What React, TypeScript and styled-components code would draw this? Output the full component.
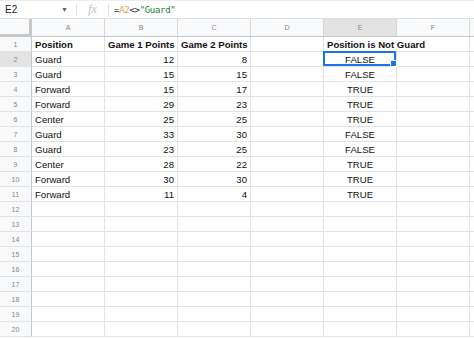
import React from "react";
import styled, { createGlobalStyle } from "styled-components";

const Global = createGlobalStyle`
  html, body { margin: 0; padding: 0; background: #fff; overflow: hidden; }
  body { font-family: Arial, "Liberation Sans", sans-serif; }
`;

const Page = styled.div`
  width: 474px;
  height: 339px;
  overflow: hidden;
  background: #fff;
`;

const FormulaBar = styled.div`
  display: flex;
  align-items: center;
  border-top: 1px solid #ececec;
  border-bottom: 1px solid #e1e1e1;
  box-sizing: border-box;
  height: 19px;
  font-family: "Liberation Sans", Arial, sans-serif;
  font-size: 10px;
  color: #222;
`;

const NameBox = styled.div`
  width: 76px;
  display: flex;
  align-items: center;
  justify-content: space-between;
  padding: 0 8px 0 5px;
  box-sizing: border-box;
`;

const Caret = styled.span`
  font-size: 7px;
  color: #666;
`;

const Sep = styled.div`
  width: 1px;
  height: 12px;
  background: #e0e0e0;
`;

const Fx = styled.div`
  width: 31px;
  text-align: center;
  font-family: "Liberation Serif", serif;
  font-style: italic;
  font-size: 12px;
  color: #c4c4c4;
`;

const Formula = styled.div`
  padding-left: 5px;
  font-family: "DejaVu Sans Mono", "Liberation Mono", monospace;
  font-size: 9px;
  letter-spacing: -0.3px;
  color: #222;
`;

const Tok = styled.span<{ $c: string }>`
  color: ${(p) => p.$c};
`;

const Grid = styled.div`
  display: grid;
  grid-template-columns: 32px repeat(6, 73px) 1fr;
  grid-template-rows: 18px;
  grid-auto-rows: 15px;
`;

const Corner = styled.div`
  background: #f8f9fa;
  border-right: 3px solid #c7c7c7;
  border-bottom: 3px solid #c7c7c7;
  box-sizing: border-box;
`;

const ColHead = styled.div<{ $sel?: boolean }>`
  background: ${(p) => (p.$sel ? "#e3e3e3" : "#f8f9fa")};
  border-right: 1px solid #d6d6d6;
  border-bottom: 1px solid #c7c7c7;
  box-sizing: border-box;
  display: flex;
  align-items: center;
  justify-content: center;
  font-size: 7px;
  color: #888;
`;

const RowHead = styled.div<{ $sel?: boolean }>`
  background: ${(p) => (p.$sel ? "#e3e3e3" : "#f8f9fa")};
  border-right: 1px solid #c7c7c7;
  border-bottom: 1px solid #e2e2e2;
  box-sizing: border-box;
  display: flex;
  align-items: center;
  justify-content: center;
  font-size: 7px;
  color: #888;
`;

const Cell = styled.div<{ $align?: string; $bold?: boolean; $overflow?: boolean }>`
  position: relative;
  border-right: 1px solid ${(p) => (p.$overflow ? "transparent" : "#e2e2e2")};
  border-bottom: 1px solid #e2e2e2;
  box-sizing: border-box;
  display: flex;
  align-items: center;
  justify-content: ${(p) =>
    p.$align === "right" ? "flex-end" : p.$align === "center" ? "center" : "flex-start"};
  padding: 1px 3px 0 3px;
  font-family: Arial, "Liberation Sans", sans-serif;
  font-size: 9.6px;
  font-weight: ${(p) => (p.$bold ? 700 : 400)};
  color: #111;
  white-space: nowrap;
  overflow: visible;
`;

const SelBox = styled.div`
  position: absolute;
  left: -1px;
  top: -1px;
  right: 0;
  bottom: 0;
  border: 2px solid #1a73e8;
  pointer-events: none;
`;

const Handle = styled.div`
  position: absolute;
  right: -3px;
  bottom: -3px;
  width: 5px;
  height: 5px;
  background: #1a73e8;
  border: 1px solid #fff;
  box-sizing: content-box;
`;

const rows: [string, string, string, string][] = [
  ["Guard", "12", "8", "FALSE"],
  ["Guard", "15", "15", "FALSE"],
  ["Forward", "15", "17", "TRUE"],
  ["Forward", "29", "23", "TRUE"],
  ["Center", "25", "25", "TRUE"],
  ["Guard", "33", "30", "FALSE"],
  ["Guard", "23", "25", "FALSE"],
  ["Center", "28", "22", "TRUE"],
  ["Forward", "30", "30", "TRUE"],
  ["Forward", "11", "4", "TRUE"],
];

const cols = ["A", "B", "C", "D", "E", "F", ""];

export default function App() {
  const body: React.ReactNode[] = [];
  body.push(<RowHead key="r1">1</RowHead>);
  body.push(<Cell key="1a" $bold>Position</Cell>);
  body.push(<Cell key="1b" $bold>Game 1 Points</Cell>);
  body.push(<Cell key="1c" $bold>Game 2 Points</Cell>);
  body.push(<Cell key="1d" />);
  body.push(<Cell key="1e" $bold $overflow>Position is Not Guard</Cell>);
  body.push(<Cell key="1f" />);
  body.push(<Cell key="1g" />);
  rows.forEach((r, i) => {
    const n = i + 2;
    body.push(<RowHead key={`r${n}`} $sel={n === 2}>{n}</RowHead>);
    body.push(<Cell key={`${n}a`}>{r[0]}</Cell>);
    body.push(<Cell key={`${n}b`} $align="right">{r[1]}</Cell>);
    body.push(<Cell key={`${n}c`} $align="right">{r[2]}</Cell>);
    body.push(<Cell key={`${n}d`} />);
    body.push(
      <Cell key={`${n}e`} $align="center">
        {r[3]}
        {n === 2 && (
          <SelBox>
            <Handle />
          </SelBox>
        )}
      </Cell>
    );
    body.push(<Cell key={`${n}f`} />);
    body.push(<Cell key={`${n}g`} />);
  });
  for (let n = 12; n <= 20; n++) {
    body.push(<RowHead key={`r${n}`}>{n}</RowHead>);
    for (let c = 0; c < 7; c++) body.push(<Cell key={`${n}-${c}`} />);
  }

  return (
    <Page>
      <Global />
      <FormulaBar>
        <NameBox>
          <span>E2</span>
          <Caret>▼</Caret>
        </NameBox>
        <Sep />
        <Fx>fx</Fx>
        <Sep />
        <Formula>
          <Tok $c="#222">=</Tok>
          <Tok $c="#e8a33d">A2</Tok>
          <Tok $c="#222">&lt;&gt;</Tok>
          <Tok $c="#188038">"Guard"</Tok>
        </Formula>
      </FormulaBar>
      <Grid>
        <Corner />
        {cols.map((c, i) => (
          <ColHead key={i} $sel={c === "E"}>{c}</ColHead>
        ))}
        {body}
      </Grid>
    </Page>
  );
}
